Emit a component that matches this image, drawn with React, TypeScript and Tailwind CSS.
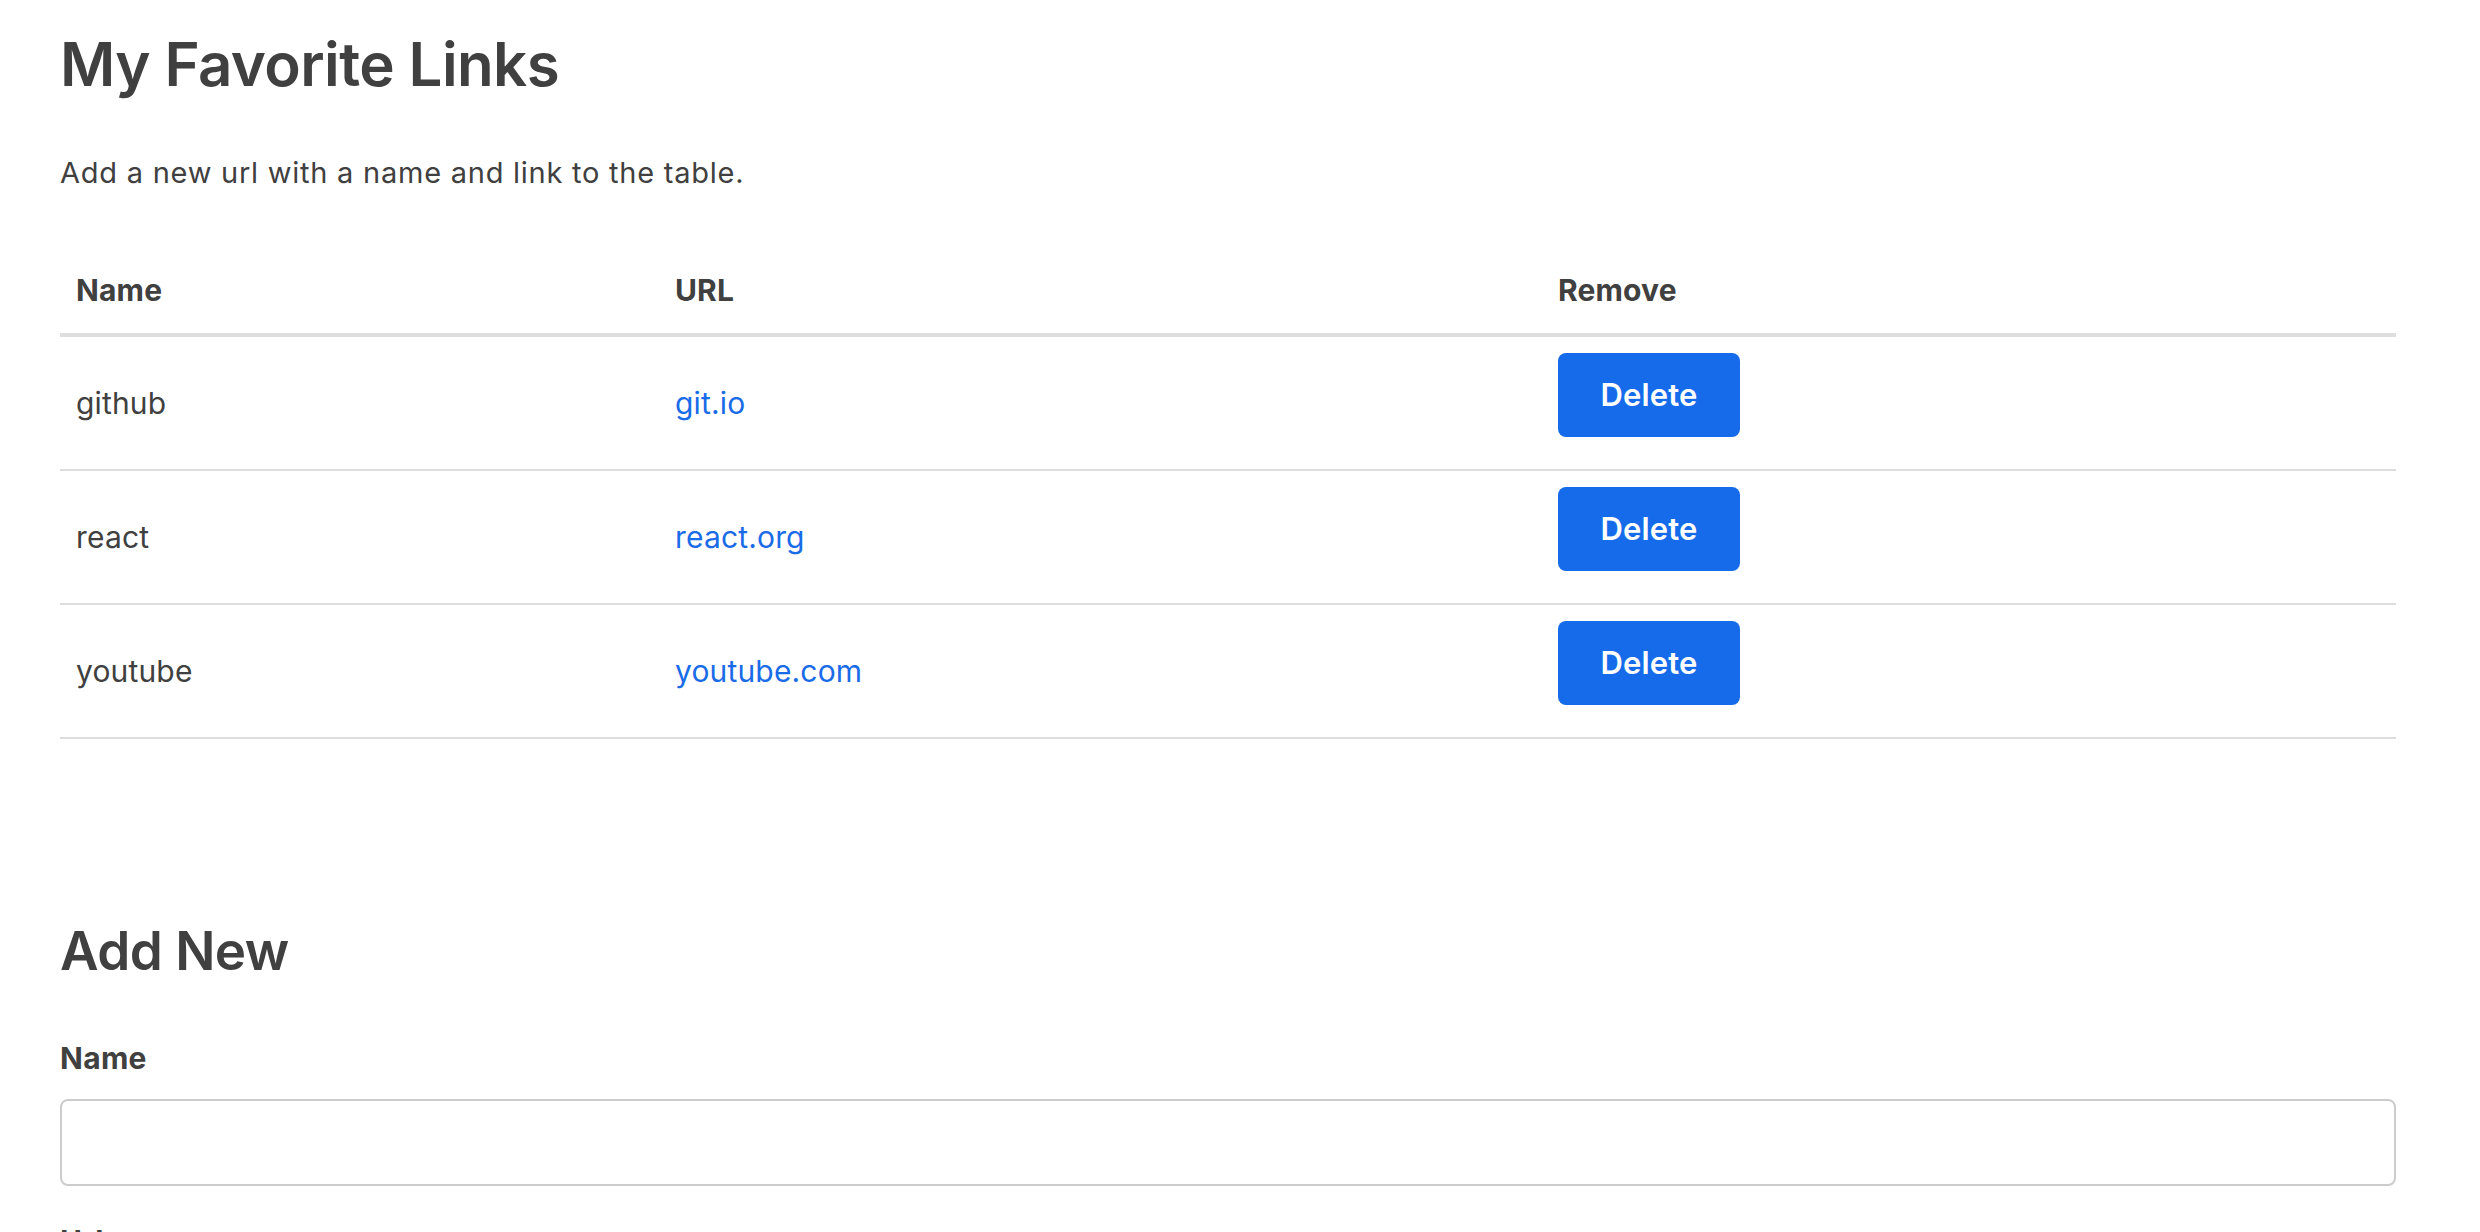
import React, { useState } from "react";

type LinkRow = { name: string; url: string };

const initialLinks: LinkRow[] = [
  { name: "github", url: "git.io" },
  { name: "react", url: "react.org" },
  { name: "youtube", url: "youtube.com" },
];

export default function App() {
  const [links, setLinks] = useState<LinkRow[]>(initialLinks);
  const [name, setName] = useState("");
  const [url, setUrl] = useState("");

  const removeLink = (index: number) => {
    setLinks(links.filter((_, i) => i !== index));
  };

  return (
    <div className="min-h-screen bg-white font-['Inter',sans-serif] text-[#404040]">
      <div className="pl-[60px] pr-[84px]">
        <h1 className="mt-[34px] text-[60px] leading-none font-semibold tracking-[-0.01em]">
          My Favorite Links
        </h1>
        <p className="mt-[58px] text-[29px] leading-[42px] tracking-[0.026em]">
          Add a new url with a name and link to the table.
        </p>

        {/* Links table */}
        <table className="mt-[53px] w-full table-fixed border-collapse tracking-[0.01em]">
          <colgroup>
            <col className="w-[599px]" />
            <col className="w-[883px]" />
            <col />
          </colgroup>
          <thead>
            <tr className="border-b-4 border-[#dddddd]">
              <th className="h-[88px] px-4 text-left align-middle text-[30px] font-bold">Name</th>
              <th className="h-[88px] px-4 text-left align-middle text-[30px] font-bold">URL</th>
              <th className="h-[88px] px-4 text-left align-middle text-[30px] font-bold">Remove</th>
            </tr>
          </thead>
          <tbody>
            {links.map((link, index) => (
              <tr key={link.name} className="border-b-2 border-[#dddddd]">
                <td className="px-4 py-4 align-middle text-[30px]">{link.name}</td>
                <td className="px-4 py-4 align-middle text-[30px]">
                  <a href="#" className="text-[#1a6be8]">
                    {link.url}
                  </a>
                </td>
                <td className="px-4 py-4 align-middle">
                  <button
                    onClick={() => removeLink(index)}
                    className="mb-4 block h-[84px] w-[182px] rounded-[8px] bg-[#166bea] text-[31px] font-semibold text-white"
                  >
                    Delete
                  </button>
                </td>
              </tr>
            ))}
          </tbody>
        </table>

        {/* Add form */}
        <h2 className="mt-[186px] text-[53px] leading-none font-semibold tracking-[-0.01em]">Add New</h2>
        <form className="mt-[65px]" onSubmit={(e) => e.preventDefault()}>
          <label className="block text-[30px] leading-[30px] font-bold tracking-[0.01em]">Name</label>
          <input
            type="text"
            value={name}
            onChange={(e) => setName(e.target.value)}
            className="mt-[26px] block h-[87px] w-full rounded-[8px] border-2 border-[#cccccc] px-4 text-[30px] outline-none"
          />
          <label className="mt-[40px] block text-[30px] leading-[30px] font-bold tracking-[0.01em]">Url</label>
          <input
            type="text"
            value={url}
            onChange={(e) => setUrl(e.target.value)}
            className="mt-[26px] block h-[87px] w-full rounded-[8px] border-2 border-[#cccccc] px-4 text-[30px] outline-none"
          />
        </form>
      </div>
    </div>
  );
}
